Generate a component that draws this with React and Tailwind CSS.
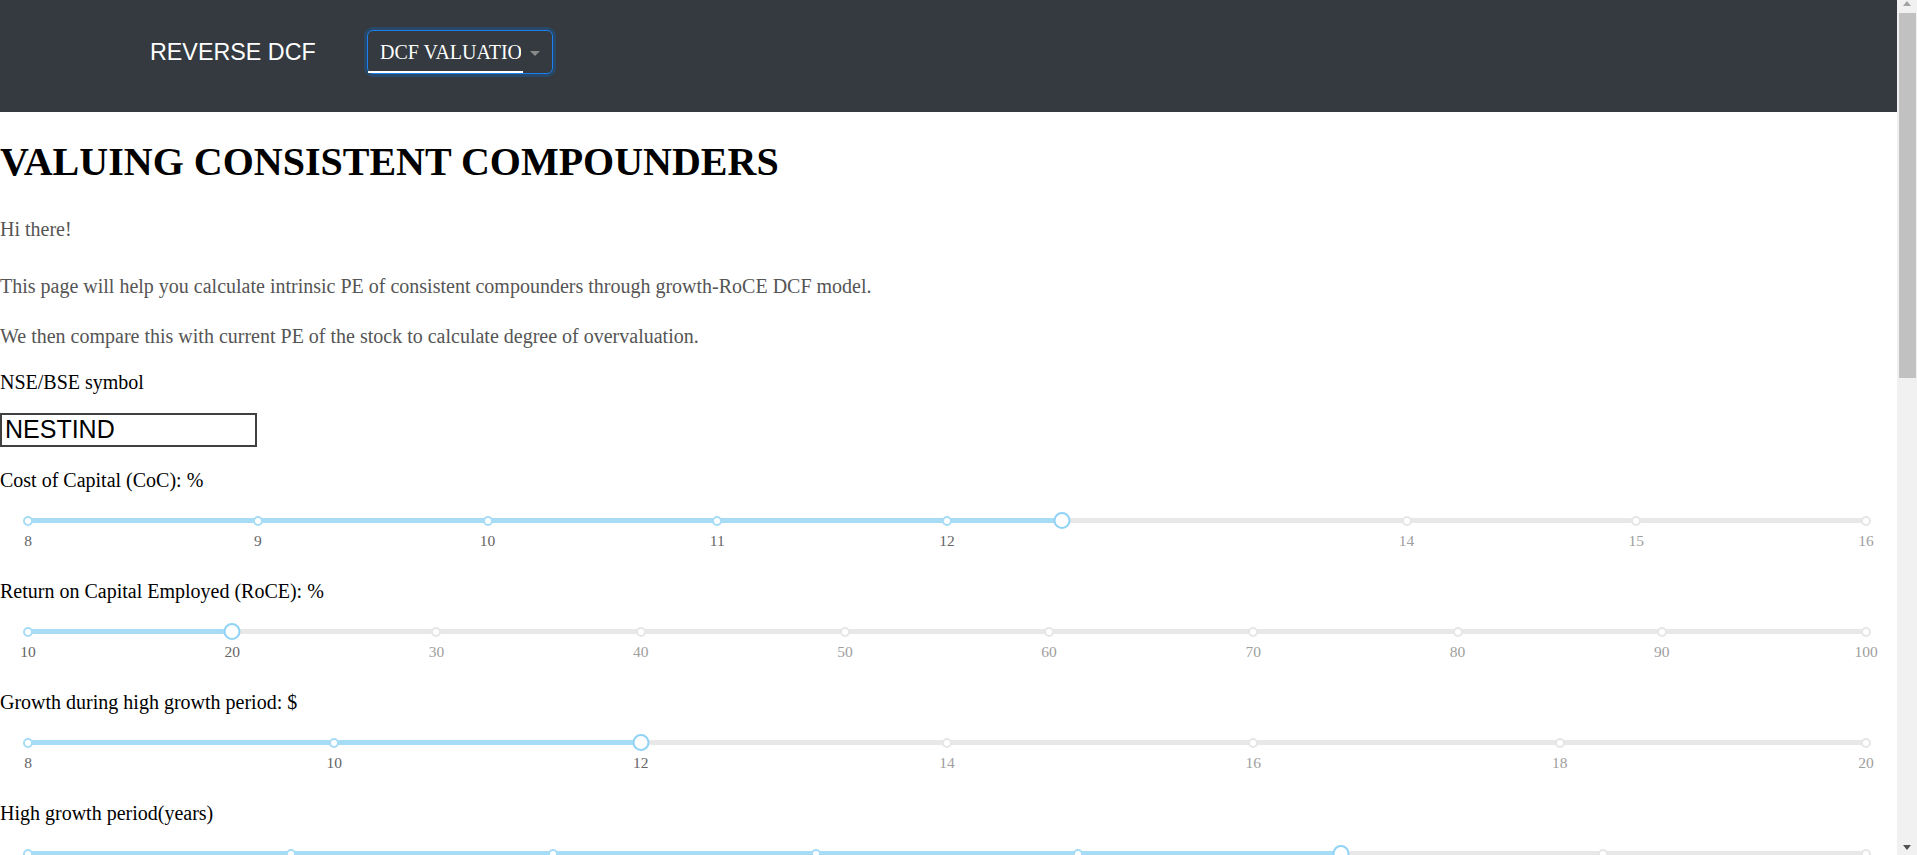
import React from 'react'

const serif = "font-['Liberation_Serif','Times_New_Roman',serif]"
const sans = "font-['Liberation_Sans',Arial,sans-serif]"

const sliders = [
  {
    label: 'Cost of Capital (CoC): %',
    min: 8,
    max: 16,
    marks: [8, 9, 10, 11, 12, 14, 15, 16],
    value: 12.5,
  },
  {
    label: 'Return on Capital Employed (RoCE): %',
    min: 10,
    max: 100,
    marks: [10, 20, 30, 40, 50, 60, 70, 80, 90, 100],
    value: 20,
  },
  {
    label: 'Growth during high growth period: $',
    min: 8,
    max: 20,
    marks: [8, 10, 12, 14, 16, 18, 20],
    value: 12,
  },
  {
    label: 'High growth period(years)',
    min: 3,
    max: 10,
    marks: [3, 4, 5, 6, 7, 8, 9, 10],
    value: 8,
  },
]

function Slider({ min, max, marks, value }) {
  const pct = (v) => `${((v - min) / (max - min)) * 100}%`

  return (
    <div className="ml-[28px] mr-[31px] mt-[19.5px]">
      <div className="relative h-[18px]">
        <div className="absolute left-0 right-0 top-[6.5px] h-[5px] rounded-full bg-[#e8e8e8]" />
        <div
          className="absolute left-0 top-[6.5px] h-[5px] rounded-full bg-[#a6dcf6]"
          style={{ width: pct(value) }}
        />
        {marks.map((m) => (
          <div
            className={`absolute top-[4px] h-[10px] w-[10px] -translate-x-1/2 rounded-full border-2 bg-white ${
              m <= value ? 'border-[#a6dcf6]' : 'border-[#e6e6e6]'
            }`}
            key={m}
            style={{ left: pct(m) }}
          />
        ))}
        <div
          className="absolute top-[0.5px] h-[17px] w-[17px] -translate-x-1/2 rounded-full border-[2.5px] border-[#91d3f6] bg-white"
          style={{ left: pct(value) }}
        />
      </div>
      <div className="relative h-[22px]">
        {marks.map((m) => (
          <span
            className={`absolute top-[2px] -translate-x-1/2 text-[15.5px] font-normal leading-[18px] ${serif} ${
              m <= value ? 'text-[#666]' : 'text-[#a0a0a0]'
            }`}
            key={m}
            style={{ left: pct(m) }}
          >
            {m}
          </span>
        ))}
      </div>
    </div>
  )
}

function Scrollbar() {
  return (
    <div className="flex w-[20px] shrink-0 flex-col bg-[#f1f1f1]">
      <div className="flex h-[13px] justify-center pt-[1px]">
        <div className="h-0 w-0 border-x-[4.5px] border-b-[5px] border-x-transparent border-b-[#a3a3a3]" />
      </div>
      <div className="ml-[2px] mr-[1px] h-[365px] bg-[#c1c1c1]" />
      <div className="flex-1" />
      <div className="flex h-[13px] justify-center pt-[3px]">
        <div className="h-0 w-0 border-x-[4.5px] border-t-[5px] border-x-transparent border-t-[#505050]" />
      </div>
    </div>
  )
}

export default function App() {
  return (
    <div className="flex h-[855px] overflow-hidden bg-white">
      <div className="min-w-0 flex-1 overflow-hidden">
        <header className="flex h-[112px] items-center bg-[#343a40] pb-[8px] pl-[150px]">
          <span className={`w-[217px] text-[23.3px] text-white ${sans}`}>REVERSE DCF</span>
          <div className="relative h-[44px] w-[186px] rounded-[6px] border border-[#1f7ef0] shadow-[0_0_0_3px_rgba(0,123,255,0.22)]">
            <div
              className={`absolute left-[12px] top-[8px] w-[140.5px] overflow-hidden whitespace-nowrap text-[20px] leading-[26px] text-white ${serif}`}
            >
              DCF VALUATION
            </div>
            <div className="absolute bottom-0 left-0 h-[2px] w-[155px] bg-white" />
            <div className="absolute left-[162px] top-[20px] h-0 w-0 border-x-[5px] border-t-[5px] border-x-transparent border-t-[#8a8a8a]" />
          </div>
        </header>

        <main className={`text-black ${serif}`}>
          <h1 className="mt-[30px] text-[40px] font-bold leading-[40px]">
            VALUING CONSISTENT COMPOUNDERS
          </h1>
          <p className="mt-[35px] text-[20px] leading-[24px] text-[#555]">Hi there!</p>
          <p className="mt-[33px] text-[20px] leading-[24px] text-[#555]">
            This page will help you calculate intrinsic PE of consistent compounders through growth-RoCE DCF model.
          </p>
          <p className="mt-[26px] text-[20px] leading-[24px] text-[#555]">
            We then compare this with current PE of the stock to calculate degree of overvaluation.
          </p>
          <p className="mt-[22px] text-[20px] leading-[24px]">NSE/BSE symbol</p>
          <input
            className={`mt-[19px] block h-[34px] w-[257px] border-2 border-[#404040] pl-[3px] text-[25px] text-black outline-none ${sans}`}
            defaultValue="NESTIND"
          />
          {sliders.map((s, i) => (
            <div className={i === 0 ? 'mt-[21px]' : 'mt-[27.5px]'} key={s.label}>
              <p className="text-[20px] leading-[24px]">{s.label}</p>
              <Slider marks={s.marks} max={s.max} min={s.min} value={s.value} />
            </div>
          ))}
        </main>
      </div>
      <Scrollbar />
    </div>
  )
}
